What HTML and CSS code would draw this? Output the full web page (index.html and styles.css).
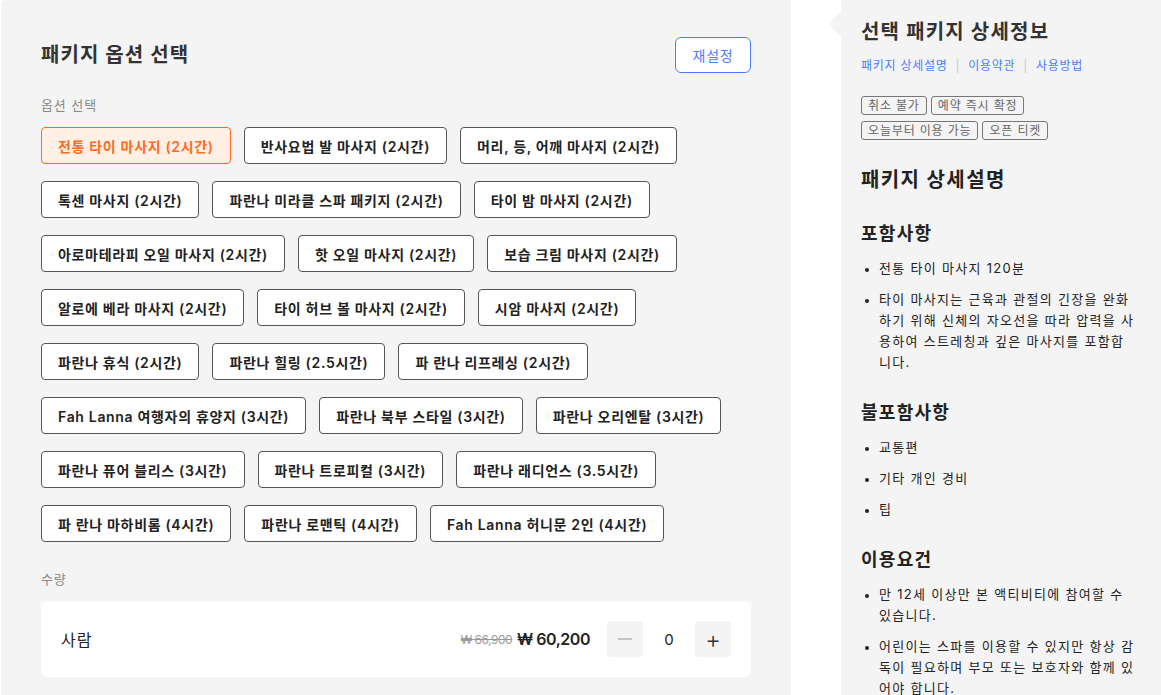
FILE: index.html
```html
<!DOCTYPE html>
<html lang="ko">
<head>
<meta charset="utf-8">
<title>패키지 옵션 선택</title>
<link rel="stylesheet" href="styles.css">
</head>
<body>
<div class="page">
  <section class="options">
    <div class="options-head">
      <h1 class="title">패키지 옵션 선택</h1>
      <button class="reset">재설정</button>
    </div>
    <div class="label">옵션 선택</div>
    <div class="chips">
      <button class="chip active">전통 타이 마사지 (2시간)</button>
      <button class="chip">반사요법 발 마사지 (2시간)</button>
      <button class="chip">머리, 등, 어깨 마사지 (2시간)</button>
      <button class="chip">톡센 마사지 (2시간)</button>
      <button class="chip">파란나 미라클 스파 패키지 (2시간)</button>
      <button class="chip">타이 밤 마사지 (2시간)</button>
      <button class="chip">아로마테라피 오일 마사지 (2시간)</button>
      <button class="chip">핫 오일 마사지 (2시간)</button>
      <button class="chip">보습 크림 마사지 (2시간)</button>
      <button class="chip">알로에 베라 마사지 (2시간)</button>
      <button class="chip">타이 허브 볼 마사지 (2시간)</button>
      <button class="chip">시암 마사지 (2시간)</button>
      <button class="chip">파란나 휴식 (2시간)</button>
      <button class="chip">파란나 힐링 (2.5시간)</button>
      <button class="chip">파 란나 리프레싱 (2시간)</button>
      <button class="chip">Fah Lanna 여행자의 휴양지 (3시간)</button>
      <button class="chip">파란나 북부 스타일 (3시간)</button>
      <button class="chip">파란나 오리엔탈 (3시간)</button>
      <button class="chip">파란나 퓨어 블리스 (3시간)</button>
      <button class="chip">파란나 트로피컬 (3시간)</button>
      <button class="chip">파란나 래디언스 (3.5시간)</button>
      <button class="chip">파 란나 마하비롬 (4시간)</button>
      <button class="chip">파란나 로맨틱 (4시간)</button>
      <button class="chip">Fah Lanna 허니문 2인 (4시간)</button>
    </div>
    <div class="label qty-label">수량</div>
    <div class="qty-card">
      <span class="qty-name">사람</span>
      <div class="qty-right">
        <span class="price-old">₩ 66,900</span>
        <span class="price-new">₩ 60,200</span>
        <div class="stepper">
          <button class="step minus"><span class="bar"></span></button>
          <span class="count">0</span>
          <button class="step plus">+</button>
        </div>
      </div>
    </div>
  </section>

  <aside class="detail">
    <h2 class="detail-title">선택 패키지 상세정보</h2>
    <nav class="links">
      <a>패키지 상세설명</a><span class="sep">|</span><a>이용약관</a><span class="sep">|</span><a>사용방법</a>
    </nav>
    <div class="tags">
      <span class="tag">취소 불가</span>
      <span class="tag">예약 즉시 확정</span>
      <span class="tag">오늘부터 이용 가능</span>
      <span class="tag">오픈 티켓</span>
    </div>
    <h2 class="section-title">패키지 상세설명</h2>
    <h3 class="sub-title">포함사항</h3>
    <ul class="list">
      <li>전통 타이 마사지 120분</li>
      <li>타이 마사지는 근육과 관절의 긴장을 완화하기 위해 신체의 자오선을 따라 압력을 사용하여 스트레칭과 깊은 마사지를 포함합니다.</li>
    </ul>
    <h3 class="sub-title">불포함사항</h3>
    <ul class="list">
      <li>교통편</li>
      <li>기타 개인 경비</li>
      <li>팁</li>
    </ul>
    <h3 class="sub-title">이용요건</h3>
    <ul class="list">
      <li>만 12세 이상만 본 액티비티에 참여할 수 있습니다.</li>
      <li>어린이는 스파를 이용할 수 있지만 항상 감독이 필요하며 부모 또는 보호자와 함께 있어야 합니다.</li>
    </ul>
  </aside>
</div>
</body>
</html>
```

FILE: styles.css
```css
* { box-sizing: border-box; }

html, body {
  margin: 0;
  padding: 0;
  background: #ffffff;
  height: 100%;
  overflow: hidden;
}

body {
  font-family: "Inter", "Noto Sans CJK KR", sans-serif;
  color: #222222;
}

.page {
  display: flex;
  align-items: flex-start;
  gap: 50px;
  padding-left: 1px;
}

.options {
  width: 790px;
  height: 760px;
  background: #f4f4f4;
  border-top-left-radius: 6px;
  padding: 37px 40px 0 40px;
}

.options-head {
  display: flex;
  justify-content: space-between;
  align-items: center;
  height: 36px;
}

.title {
  margin: 0;
  font-size: 20px;
  font-weight: 700;
  color: #333333;
  line-height: 28px;
  letter-spacing: 0.055em;
}

.reset {
  width: 76px;
  height: 36px;
  border: 1px solid #4d7cfe;
  border-radius: 6px;
  background: #ffffff;
  color: #4d7cfe;
  font-family: inherit;
  font-size: 14px;
  letter-spacing: 0.06em;
  padding: 0;
}

.label {
  font-size: 13px;
  line-height: 18px;
  color: #888888;
  margin-top: 23px;
  letter-spacing: 0.07em;
}

.chips {
  display: flex;
  flex-wrap: wrap;
  gap: 17px 13px;
  margin-top: 13px;
}

.chip {
  height: 37px;
  padding: 0 16px;
  border: 1px solid #555555;
  border-radius: 4px;
  background: #ffffff;
  color: #222222;
  font-family: inherit;
  font-size: 14px;
  font-weight: 600;
  letter-spacing: 0.048em;
  white-space: nowrap;
}

.chip.active {
  background: #fff0e5;
  border-color: #ff6a1e;
  color: #ff6a1e;
}

.qty-label {
  margin-top: 28px;
}

.qty-card {
  margin-top: 13px;
  height: 76px;
  background: #ffffff;
  border-radius: 6px;
  padding: 0 20px;
  display: flex;
  align-items: center;
  justify-content: space-between;
}

.qty-name {
  font-size: 16px;
  color: #222222;
  letter-spacing: 0.07em;
}

.qty-right {
  display: flex;
  align-items: center;
}

.price-old {
  font-size: 12px;
  color: #999999;
  text-decoration: line-through;
  margin-right: 5px;
  letter-spacing: -0.04em;
}

.price-new {
  font-size: 16px;
  font-weight: 600;
  color: #222222;
  margin-right: 17px;
  letter-spacing: -0.03em;
}

.stepper {
  display: flex;
  align-items: center;
}

.step {
  width: 36px;
  height: 36px;
  border: none;
  border-radius: 4px;
  background: #f4f4f4;
  padding: 0;
  font-family: inherit;
  display: flex;
  align-items: center;
  justify-content: center;
}

.step .bar {
  display: block;
  width: 14px;
  height: 1.5px;
  background: #c4c4c4;
}

.step.plus {
  color: #333333;
  font-size: 24px;
  font-weight: 300;
}

.count {
  width: 52px;
  text-align: center;
  font-size: 15px;
  color: #222222;
}

.detail {
  position: relative;
  width: 320px;
  min-height: 760px;
  background: #f4f4f4;
  padding: 18px 24px 0 20px;
}

.detail::before {
  content: "";
  position: absolute;
  left: -9px;
  top: 15px;
  width: 18px;
  height: 18px;
  background: #f4f4f4;
  transform: rotate(45deg);
  border-radius: 3px;
}

.detail-title {
  margin: 0;
  font-size: 20px;
  font-weight: 700;
  line-height: 28px;
  color: #333333;
  letter-spacing: 0.06em;
}

.links {
  margin-top: 11px;
  font-size: 12px;
  line-height: 18px;
  color: #4d7cfe;
  letter-spacing: 0.06em;
}

.links a { color: #4d7cfe; }

.sep {
  color: #cccccc;
  margin: 0 8px;
}

.tags {
  margin-top: 21px;
  display: flex;
  flex-wrap: wrap;
  gap: 6px 4px;
  width: 200px;
}

.tag {
  border: 1px solid #777777;
  border-radius: 3px;
  padding: 0 6px;
  height: 19px;
  line-height: 17px;
  font-size: 12px;
  color: #666666;
  letter-spacing: 0.07em;
}

.section-title {
  margin: 26px 0 0 0;
  font-size: 20px;
  font-weight: 700;
  line-height: 28px;
  color: #222222;
  letter-spacing: 0.07em;
}

.sub-title {
  margin: 27px 0 0 0;
  font-size: 18px;
  font-weight: 700;
  line-height: 26px;
  color: #222222;
  letter-spacing: 0.07em;
}

.list {
  margin: 11px 0 0 0;
  padding-left: 18px;
  font-size: 13px;
  line-height: 21px;
  color: #222222;
  letter-spacing: 0.1em;
}

.list li {
  margin-bottom: 10px;
}

.list li::marker {
  font-size: 11px;
}
```
